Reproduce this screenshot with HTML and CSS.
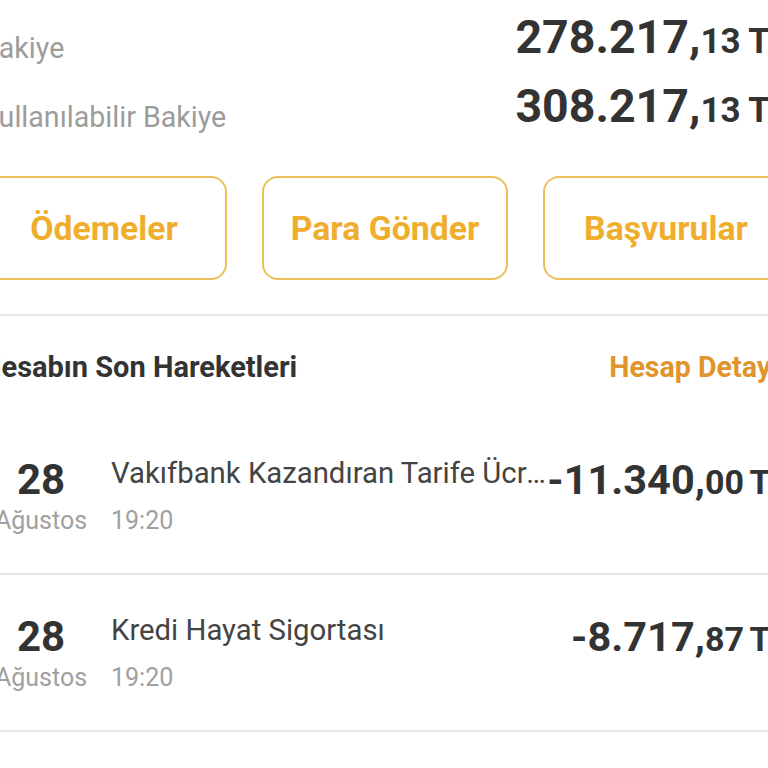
FILE: index.html
```html
<!DOCTYPE html>
<html lang="tr">
<head>
<meta charset="utf-8">
<title>Hesap</title>
<link rel="stylesheet" href="styles.css">
</head>
<body>
<div class="page">
  <section class="balances">
    <div class="balance-row">
      <span class="balance-label">Bakiye</span>
      <span class="balance-amount">278.217,<span class="minor">13 TL</span></span>
    </div>
    <div class="balance-row">
      <span class="balance-label">Kullanılabilir Bakiye</span>
      <span class="balance-amount">308.217,<span class="minor">13 TL</span></span>
    </div>
  </section>

  <nav class="actions">
    <button class="action">Ödemeler</button>
    <button class="action">Para Gönder</button>
    <button class="action">Başvurular</button>
  </nav>

  <section class="movements">
    <div class="movements-head">
      <h2 class="movements-title">Hesabın Son Hareketleri</h2>
      <a class="movements-link">Hesap Detayı</a>
    </div>

    <div class="tx">
      <div class="tx-date">
        <span class="tx-day">28</span>
        <span class="tx-month">Ağustos</span>
      </div>
      <div class="tx-info">
        <span class="tx-name">Vakıfbank Kazandıran Tarife Ücreti</span>
        <span class="tx-time">19:20</span>
      </div>
      <span class="tx-amount">-11.340,<span class="minor tx-minor">00 TL</span></span>
    </div>

    <div class="tx tx-lined">
      <div class="tx-date">
        <span class="tx-day">28</span>
        <span class="tx-month">Ağustos</span>
      </div>
      <div class="tx-info">
        <span class="tx-name">Kredi Hayat Sigortası</span>
        <span class="tx-time">19:20</span>
      </div>
      <span class="tx-amount">-8.717,<span class="minor tx-minor">87 TL</span></span>
    </div>
    <div class="tx-end"></div>
  </section>
</div>
</body>
</html>
```

FILE: styles.css
```css
html, body {
  margin: 0;
  padding: 0;
  background: #ffffff;
  overflow: hidden;
}

body {
  font-family: Roboto, "Liberation Sans", Arial, sans-serif;
  color: #333333;
}

.page {
  width: 808px;
  margin-left: -19px;
  padding-top: 9px;
}

/* balances */
.balances {
  display: flex;
  flex-direction: column;
  gap: 13px;
}

.balance-row {
  display: flex;
  justify-content: space-between;
  align-items: flex-end;
}

.balance-label {
  font-size: 28.6px;
  line-height: 34px;
  color: #9c9c9c;
}

.balance-amount {
  font-size: 46.5px;
  line-height: 56px;
  font-weight: 700;
  color: #333333;
  white-space: nowrap;
}

.minor {
  font-size: 35px;
  line-height: 1;
}

/* action buttons */
.actions {
  display: grid;
  grid-template-columns: repeat(3, 1fr);
  gap: 35px;
  margin-top: 42px;
}

.action {
  height: 104px;
  border: 2px solid #ebc05a;
  border-radius: 16px;
  background: #ffffff;
  font-family: Roboto, "Liberation Sans", Arial, sans-serif;
  font-size: 33.8px;
  font-weight: 700;
  color: #f0ae2e;
  padding: 0;
}

/* movements */
.movements {
  margin-top: 34px;
  border-top: 2px solid #e6e6e6;
}

.movements-head {
  display: flex;
  justify-content: space-between;
  align-items: center;
  padding: 34px 0 34px;
}

.movements-title {
  margin: 0;
  font-size: 29px;
  line-height: 34px;
  font-weight: 700;
  color: #333333;
}

.movements-link {
  font-size: 28.6px;
  line-height: 34px;
  font-weight: 700;
  color: #e2942c;
  margin-right: 10px;
}

.tx {
  display: flex;
  align-items: flex-start;
  padding: 38px 0 37px;
}

.tx-lined {
  border-top: 2px solid #e6e6e6;
}

.tx-end {
  border-top: 2px solid #e6e6e6;
}

.tx-date {
  width: 120px;
  flex: none;
  display: flex;
  flex-direction: column;
  align-items: center;
  margin-right: 10px;
}

.tx-day {
  font-size: 42px;
  line-height: 48px;
  font-weight: 700;
  color: #333333;
}

.tx-month {
  margin-top: 2px;
  font-size: 25px;
  line-height: 30px;
  color: #a0a0a0;
}

.tx-info {
  flex: 1;
  min-width: 0;
  display: flex;
  flex-direction: column;
}

.tx-name {
  font-size: 29.3px;
  line-height: 34px;
  color: #444444;
  white-space: nowrap;
  overflow: hidden;
  text-overflow: ellipsis;
}

.tx-time {
  margin-top: 16px;
  font-size: 25px;
  line-height: 30px;
  color: #a0a0a0;
}

.tx-amount {
  flex: none;
  font-size: 41.5px;
  line-height: 48px;
  font-weight: 700;
  color: #333333;
  white-space: nowrap;
}

.tx-minor {
  font-size: 34px;
  word-spacing: -2px;
}
```
